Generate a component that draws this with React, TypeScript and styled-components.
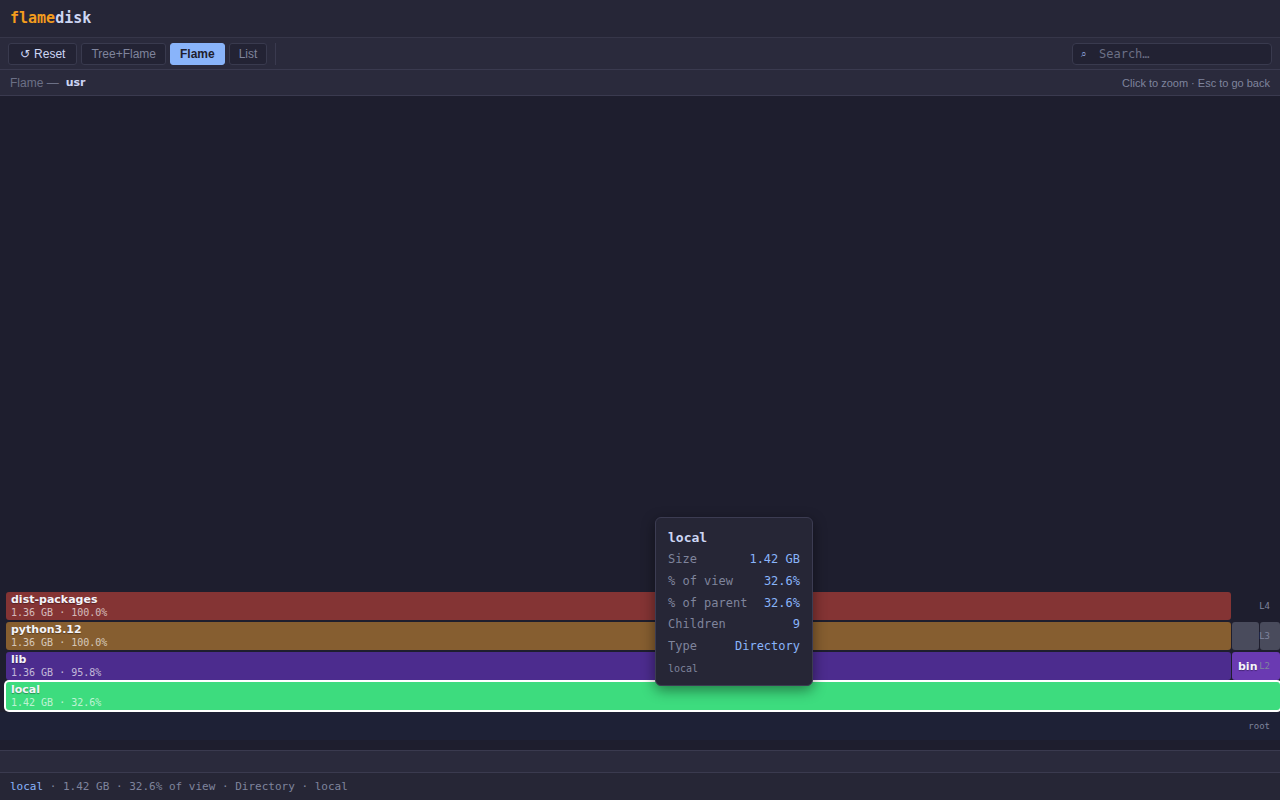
import styled, { createGlobalStyle } from 'styled-components'

const GlobalStyle = createGlobalStyle`
  html, body {
    margin: 0;
    padding: 0;
    background: #1e1e2e;
  }
  * {
    box-sizing: border-box;
  }
`

const Shell = styled.div`
  height: 100vh;
  display: flex;
  flex-direction: column;
  font-family: 'Liberation Sans', Arial, sans-serif;
  color: #cdd6f4;
  background: #1e1e2e;
  overflow: hidden;
`

const Header = styled.header`
  height: 38px;
  flex: none;
  display: flex;
  align-items: center;
  padding: 0 10px;
  background: #262637;
  border-bottom: 1px solid #363649;
`

const Logo = styled.div`
  font-family: 'DejaVu Sans Mono', monospace;
  font-weight: bold;
  font-size: 15px;
  color: #cdd6f4;
  margin-top: -1px;
`

const LogoAccent = styled.span`
  color: #f39c1e;
`

const Toolbar = styled.div`
  height: 32px;
  flex: none;
  display: flex;
  align-items: center;
  gap: 4px;
  padding: 0 8px;
  background: #2a2a3c;
  border-bottom: 1px solid #3a3a4f;
`

const Button = styled.button<{ $active?: boolean; $primary?: boolean }>`
  height: 22px;
  padding: ${(p) => (p.$primary ? '0 11px' : '0 9px')};
  font-family: 'Liberation Sans', Arial, sans-serif;
  font-size: 12px;
  font-weight: ${(p) => (p.$active ? 'bold' : 'normal')};
  border-radius: 3px;
  border: 1px solid ${(p) => (p.$active ? '#89b4fa' : '#393a4e')};
  background: ${(p) => (p.$active ? '#89b4fa' : '#232334')};
  color: ${(p) => (p.$active ? '#1e1e2e' : p.$primary ? '#cdd6f4' : '#7f849c')};
  cursor: pointer;
`

const ResetGlyph = styled.span`
  display: inline-block;
  margin-right: 4px;
  font-family: 'DejaVu Sans', sans-serif;
`

const Divider = styled.div`
  width: 1px;
  height: 22px;
  background: #3a3a4f;
  margin-left: 4px;
`

const Spacer = styled.div`
  flex: 1;
`

const SearchBox = styled.label`
  width: 200px;
  height: 22px;
  display: flex;
  align-items: center;
  gap: 12px;
  padding: 0 8px;
  background: #222233;
  border: 1px solid #393a4e;
  border-radius: 4px;
`

const SearchIcon = styled.span`
  font-size: 10px;
  color: #89a0d8;
  font-family: 'DejaVu Sans', sans-serif;
`

const SearchInput = styled.input`
  flex: 1;
  min-width: 0;
  border: none;
  outline: none;
  background: transparent;
  color: #cdd6f4;
  font-family: 'DejaVu Sans Mono', monospace;
  font-size: 12px;
  padding: 0;
  &::placeholder {
    color: #6c7086;
  }
`

const Crumbs = styled.div`
  height: 26px;
  flex: none;
  display: flex;
  align-items: center;
  padding: 0 10px;
  font-size: 12px;
  color: #6c7086;
  background: #2a2a3c;
  border-bottom: 1px solid #3a3a4f;
`

const CrumbCurrent = styled.span`
  font-family: 'DejaVu Sans', sans-serif;
  font-size: 11px;
  font-weight: bold;
  color: #cdd6f4;
  margin-left: 7px;
`

const Hint = styled.span`
  margin-left: auto;
  font-size: 11px;
  color: #7f849c;
`

const Chart = styled.main`
  flex: 1;
  position: relative;
  display: flex;
  flex-direction: column;
  justify-content: flex-end;
  gap: 2px;
  padding-bottom: 10px;
`

const Row = styled.div<{ $root?: boolean }>`
  position: relative;
  height: 28px;
  display: flex;
  gap: 1px;
  padding-left: ${(p) => (p.$root ? '0' : '6px')};
`

const Bar = styled.div<{ $bg: string; $selected?: boolean; $compact?: boolean; $plain?: boolean }>`
  height: 28px;
  flex: none;
  overflow: hidden;
  white-space: nowrap;
  display: flex;
  flex-direction: column;
  justify-content: ${(p) => (p.$compact ? 'center' : 'flex-start')};
  padding: ${(p) => (p.$compact ? '0 6px' : '1px 5px 0')};
  background: ${(p) => p.$bg};
  border-radius: ${(p) => (p.$plain ? '0' : '3px')};
  box-shadow: ${(p) => (p.$selected ? '0 0 0 2px #ffffff' : 'none')};
  position: relative;
  z-index: ${(p) => (p.$selected ? 2 : 1)};
`

const BarName = styled.div`
  font-family: 'DejaVu Sans', sans-serif;
  font-weight: bold;
  font-size: 11px;
  line-height: 13px;
  color: #f4f4fa;
  text-shadow: 0 1px 1px rgba(0, 0, 0, 0.35);
`

const BarValue = styled.div`
  font-family: 'DejaVu Sans Mono', monospace;
  font-size: 10px;
  line-height: 14px;
  color: rgba(255, 255, 255, 0.68);
`

const DepthTag = styled.span`
  position: absolute;
  right: 10px;
  top: 50%;
  transform: translateY(-50%);
  z-index: 3;
  font-family: 'DejaVu Sans Mono', monospace;
  font-size: 9px;
  color: #7f849c;
`

const Tooltip = styled.div`
  position: absolute;
  left: 655px;
  top: 421px;
  width: 158px;
  z-index: 10;
  padding: 12px 12px 9px;
  background: #262636;
  border: 1px solid #3c3c52;
  border-radius: 6px;
  box-shadow: 0 4px 14px rgba(0, 0, 0, 0.45);
  font-family: 'DejaVu Sans Mono', monospace;
`

const TipTitle = styled.div`
  font-weight: bold;
  font-size: 13px;
  line-height: 16px;
  color: #cdd6f4;
  margin-bottom: 3px;
`

const TipRow = styled.div`
  display: flex;
  justify-content: space-between;
  font-size: 12px;
  line-height: 21.8px;
`

const TipKey = styled.span`
  color: #7f849c;
`

const TipVal = styled.span`
  color: #89b4fa;
`

const TipPath = styled.div`
  font-size: 10px;
  line-height: 14px;
  color: #7f849c;
  margin-top: 4px;
`

const Track = styled.div`
  height: 23px;
  flex: none;
  background: #2a2a3c;
  border-top: 1px solid #3a3a4f;
  border-bottom: 1px solid #3a3a4f;
`

const Status = styled.footer`
  height: 27px;
  flex: none;
  display: flex;
  align-items: center;
  padding: 0 10px;
  background: #262636;
  font-family: 'DejaVu Sans Mono', monospace;
  font-size: 11px;
  color: #7f849c;
  white-space: pre;
`

const StatusName = styled.span`
  color: #89b4fa;
`

type Cell = {
  name?: string
  value?: string
  width: number
  bg: string
  compact?: boolean
  selected?: boolean
}

type Level = {
  depth?: string
  cells: Cell[]
}

const levels: Level[] = [
  {
    depth: 'L4',
    cells: [{ name: 'dist-packages', value: '1.36 GB · 100.0%', width: 1225, bg: '#843434' }],
  },
  {
    depth: 'L3',
    cells: [
      { name: 'python3.12', value: '1.36 GB · 100.0%', width: 1225, bg: '#865e30' },
      { width: 27, bg: '#494b5c' },
      { width: 20, bg: '#494b5c' },
    ],
  },
  {
    depth: 'L2',
    cells: [
      { name: 'lib', value: '1.36 GB · 95.8%', width: 1225, bg: '#4c2c8e' },
      { name: 'bin', width: 48, bg: '#6a3ab2', compact: true },
    ],
  },
  {
    cells: [{ name: 'local', value: '1.42 GB · 32.6%', width: 1274, bg: '#3ddc7e', selected: true }],
  },
]

const tipRows = [
  ['Size', '1.42 GB'],
  ['% of view', '32.6%'],
  ['% of parent', '32.6%'],
  ['Children', '9'],
  ['Type', 'Directory'],
]

const App = () => {
  return (
    <Shell>
      <GlobalStyle />
      <Header>
        <Logo>
          <LogoAccent>flame</LogoAccent>disk
        </Logo>
      </Header>

      <Toolbar>
        <Button $primary>
          <ResetGlyph>↺</ResetGlyph>Reset
        </Button>
        <Button>Tree+Flame</Button>
        <Button $active>Flame</Button>
        <Button>List</Button>
        <Divider />
        <Spacer />
        <SearchBox>
          <SearchIcon>⌕</SearchIcon>
          <SearchInput placeholder="Search…" />
        </SearchBox>
      </Toolbar>

      <Crumbs>
        Flame —<CrumbCurrent>usr</CrumbCurrent>
        <Hint>Click to zoom · Esc to go back</Hint>
      </Crumbs>

      <Chart>
        {levels.map((level, i) => (
          <Row key={i}>
            {level.cells.map((c, j) => (
              <Bar key={j} $bg={c.bg} $compact={c.compact} $selected={c.selected} style={{ width: c.width }}>
                {c.name && <BarName>{c.name}</BarName>}
                {c.value && <BarValue>{c.value}</BarValue>}
              </Bar>
            ))}
            {level.depth && <DepthTag>{level.depth}</DepthTag>}
          </Row>
        ))}
        <Row $root>
          <Bar $bg="#1e2136" $plain style={{ width: 1280 }} />
          <DepthTag>root</DepthTag>
        </Row>

        <Tooltip>
          <TipTitle>local</TipTitle>
          {tipRows.map(([k, v]) => (
            <TipRow key={k}>
              <TipKey>{k}</TipKey>
              <TipVal>{v}</TipVal>
            </TipRow>
          ))}
          <TipPath>local</TipPath>
        </Tooltip>
      </Chart>

      <Track />

      <Status>
        <StatusName>local</StatusName> · 1.42 GB · 32.6% of view · Directory · local
      </Status>
    </Shell>
  )
}

export default App
